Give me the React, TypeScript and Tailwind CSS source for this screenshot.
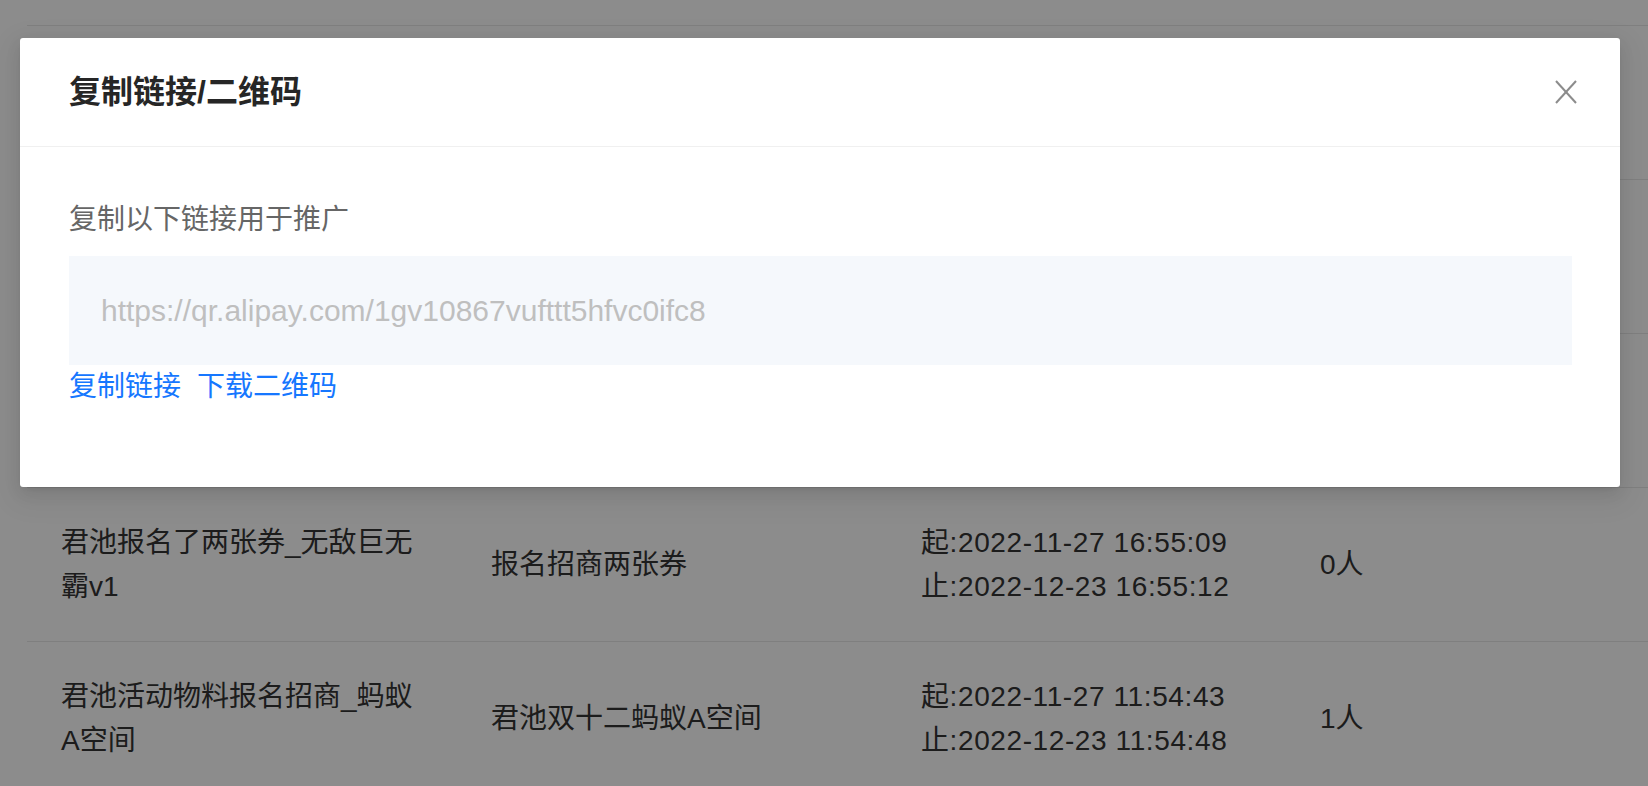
import { Fragment } from 'react';

type Row = {
  name: string;
  activity: string;
  start: string;
  end: string;
  count: string;
};

const rows: Row[] = [
  { name: '君池报名测试活动_双十二', activity: '报名招商测试', start: '2022-11-28 10:12:30', end: '2022-12-25 10:12:33', count: '2人' },
  { name: '君池报名活动_支付宝会员', activity: '会员专享券', start: '2022-11-28 09:40:11', end: '2022-12-24 09:40:15', count: '0人' },
  { name: '君池商家报名_新客立减', activity: '新客立减', start: '2022-11-27 18:02:51', end: '2022-12-23 18:02:55', count: '3人' },
  { name: '君池报名了两张券_无敌巨无霸v1', activity: '报名招商两张券', start: '2022-11-27 16:55:09', end: '2022-12-23 16:55:12', count: '0人' },
  { name: '君池活动物料报名招商_蚂蚁A空间', activity: '君池双十二蚂蚁A空间', start: '2022-11-27 11:54:43', end: '2022-12-23 11:54:48', count: '1人' },
];

const CloseIcon = () => (
  <svg width="22" height="24" viewBox="0 0 22 24" fill="none" stroke="#8c8c8c" strokeWidth="2">
    <path d="M1 1L21 23" />
    <path d="M21 1L1 23" />
  </svg>
);

const App = () => {
  return (
    <div className="relative h-[786px] w-full overflow-hidden bg-white font-['Liberation_Sans','Noto_Sans_CJK_SC',sans-serif]">
      {/* table under the mask */}
      <div className="pl-[27px]">
        <div className="h-[25px]" />
        {rows.map(row => (
          <Fragment key={row.name}>
            <div className="grid h-[154px] grid-cols-[430px_430px_399px_1fr] items-center border-t border-[#e8e8e8] text-[28px] leading-[44px] text-[#333]">
              <div className="pl-[34px] pr-[34px]">{row.name}</div>
              <div className="pl-[34px]">{row.activity}</div>
              <div className="pl-[34px] tracking-[0.6px]">
                <div>起:{row.start}</div>
                <div>止:{row.end}</div>
              </div>
              <div className="pl-[34px]">{row.count}</div>
            </div>
          </Fragment>
        ))}
      </div>

      {/* mask */}
      <div className="absolute inset-0 bg-black/45" />

      {/* modal */}
      <div className="absolute left-[20px] top-[38px] w-[1600px] rounded-[3px] bg-white shadow-[0_6px_16px_rgba(0,0,0,0.08),0_3px_6px_-4px_rgba(0,0,0,0.12),0_9px_28px_8px_rgba(0,0,0,0.05)]">
        <div className="flex h-[109px] items-center justify-between border-b border-[#f0f0f0] pl-[49px] pr-[43px]">
          <span className="text-[32px] font-semibold text-[#262626]">复制链接/二维码</span>
          <button type="button" className="flex items-center justify-center">
            <CloseIcon />
          </button>
        </div>
        <div className="pb-[78px] pl-[49px] pr-[48px] pt-[53px]">
          <div className="text-[28px] leading-[40px] text-[#666]">复制以下链接用于推广</div>
          <div className="mt-4 flex h-[109px] items-center bg-[#f5f8fc] pl-[32px] text-[30px] text-[#bfbfbf]">
            https://qr.alipay.com/1gv10867vufttt5hfvc0ifc8
          </div>
          <div className="flex gap-[16px] text-[28px] leading-[44px] text-[#1677ff]">
            <span className="cursor-pointer">复制链接</span>
            <span className="cursor-pointer">下载二维码</span>
          </div>
        </div>
      </div>
    </div>
  );
};

export default App;
